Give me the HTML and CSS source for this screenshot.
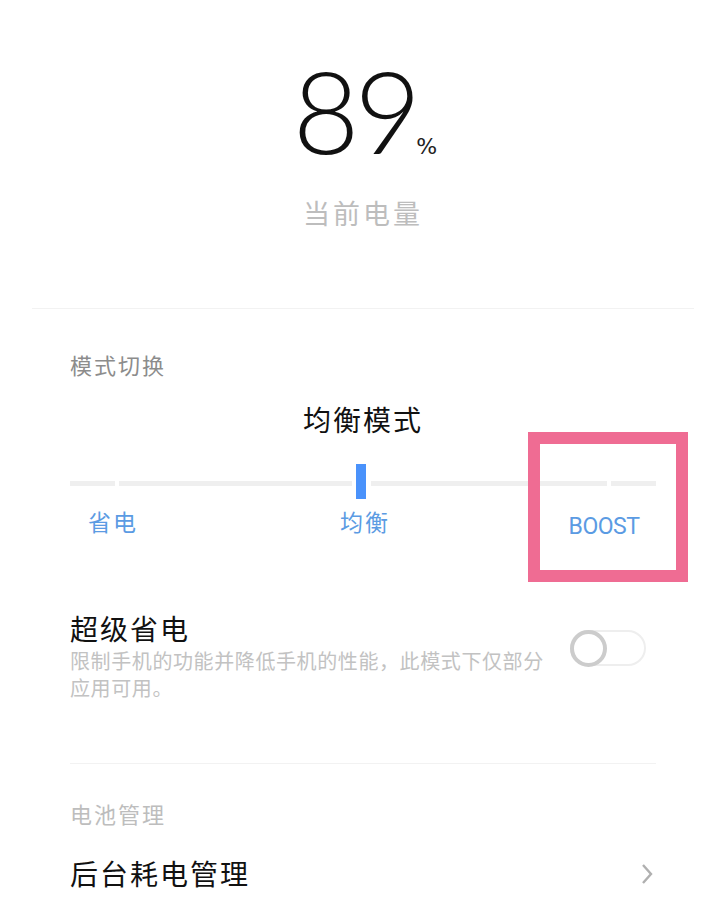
FILE: index.html
```html
<!DOCTYPE html>
<html lang="zh-CN">
<head>
    <meta charset="UTF-8">
    <title>电池</title>
    <link rel="stylesheet" href="styles.css">
</head>
<body>

<div class="page">
    <div class="level">
        <span class="num">89</span><span class="pct">%</span>
    </div>
    <div class="level-tip">当前电量</div>

    <div class="line line-wide"></div>

    <div class="sub">模式切换</div>
    <div class="mode-name">均衡模式</div>

    <div class="slider">
        <div class="seg seg-s"></div>
        <div class="seg seg-l"></div>
        <div class="thumb"></div>
        <div class="seg seg-r"></div>
        <div class="seg seg-s"></div>
    </div>
    <div class="marks">
        <span class="mark mark-1">省电</span>
        <span class="mark mark-2">均衡</span>
        <span class="mark mark-3">BOOST</span>
    </div>

    <div class="row">
        <div class="row-text">
            <div class="row-title">超级省电</div>
            <div class="row-desc">限制手机的功能并降低手机的性能，此模式下仅部分应用可用。</div>
        </div>
        <div class="switch">
            <div class="knob"></div>
        </div>
    </div>

    <div class="line line-2"></div>

    <div class="sub sub-light">电池管理</div>
    <div class="item">
        <span class="item-title">后台耗电管理</span>
        <svg class="arrow" width="12" height="22" viewBox="0 0 12 22">
            <polyline points="2,2 10,11 2,20" fill="none" stroke="#b0b0b0" stroke-width="2.4"/>
        </svg>
    </div>
</div>

<!-- 标注框 -->
<div class="mark-box"></div>

</body>
</html>
```

FILE: styles.css
```css
*{
    padding: 0;
    margin: 0;
    box-sizing: border-box;
}
body {
    background-color: #FFFFFF;
    font-family: "Noto Sans CJK SC", sans-serif;
    position: relative;
    width: 715px;
    height: 905px;
    overflow: hidden;
}

.page{
    padding: 52px 59px 0 70px;
}

.level{
    text-align: center;
    height: 115px;
    line-height: 115px;
    padding-left: 4px;
}

.num{
    font-family: Lato, sans-serif;
    font-weight: 300;
    font-size: 115px;
    letter-spacing: -5px;
    color: #111;
}

.pct{
    font-family: "DejaVu Sans", sans-serif;
    font-size: 22px;
    color: #222;
    margin-left: 0;
}

.level-tip{
    margin-top: 26px;
    text-align: center;
    font-size: 27px;
    line-height: 40px;
    letter-spacing: 3px;
    color: #bdbdbd;
}

.line{
    height: 1px;
    background-color: #f2f2f2;
}

.line-wide{
    margin: 75px -38px 0 -38px;
}

.sub{
    margin-top: 39px;
    font-size: 22px;
    line-height: 32px;
    letter-spacing: 2px;
    color: #8c8c8c;
}

.mode-name{
    margin-top: 19px;
    text-align: center;
    font-size: 28px;
    line-height: 40px;
    letter-spacing: 2px;
    color: #111;
}

.slider{
    display: flex;
    align-items: flex-start;
    height: 35px;
    margin-top: 25px;
}

.seg{
    height: 5px;
    margin-top: 17px;
    background-color: #efefef;
}

.seg-s{
    width: 45px;
}

.seg-l{
    width: 233px;
    margin-left: 4px;
    margin-right: 4px;
}

.seg-r{
    width: 236px;
    margin-left: 5px;
    margin-right: 4px;
}

.thumb{
    width: 10px;
    height: 35px;
    background-color: #4a92fb;
}

.marks{
    display: flex;
    align-items: flex-start;
    height: 32px;
    margin-top: 6px;
    font-size: 23px;
    line-height: 32px;
    letter-spacing: 2px;
    color: #5b9be3;
}

.mark{
    text-align: center;
}

.mark-1{
    width: 86px;
}

.mark-2{
    width: 100px;
    margin-left: 159px;
}

.mark-3{
    width: 100px;
    margin-left: 139px;
    padding-top: 6px;
    font-family: Roboto, sans-serif;
    font-size: 23px;
    letter-spacing: -0.5px;
}

.row{
    display: flex;
    justify-content: space-between;
    align-items: flex-start;
    margin-top: 72px;
}

.row-text{
    width: 485px;
}

.row-title{
    font-size: 28px;
    line-height: 38px;
    letter-spacing: 2px;
    color: #111;
}

.row-desc{
    font-size: 20px;
    line-height: 27px;
    letter-spacing: 0.6px;
    color: #c2c2c2;
}

.switch{
    display: flex;
    align-items: flex-start;
    width: 76px;
    height: 36px;
    margin-top: 21px;
    margin-right: 10px;
    border: 2px solid #eeeeee;
    border-radius: 18px;
}

.knob{
    width: 37px;
    height: 37px;
    margin: -2px 0 0 -2px;
    border: 4px solid #cccccc;
    border-radius: 50%;
    background-color: #FFFFFF;
}

.line-2{
    margin-top: 62px;
}

.sub-light{
    margin-top: 33px;
    color: #bdbdbd;
}

.item{
    display: flex;
    justify-content: space-between;
    align-items: center;
    margin-top: 24px;
    height: 40px;
}

.item-title{
    font-size: 28px;
    line-height: 40px;
    letter-spacing: 2px;
    color: #111;
}

.arrow{
    margin-right: 3px;
    margin-top: 2px;
}

.mark-box{
    position: absolute;
    left: 528px;
    top: 432px;
    width: 160px;
    height: 150px;
    border: 12px solid #ef6c93;
}
```
